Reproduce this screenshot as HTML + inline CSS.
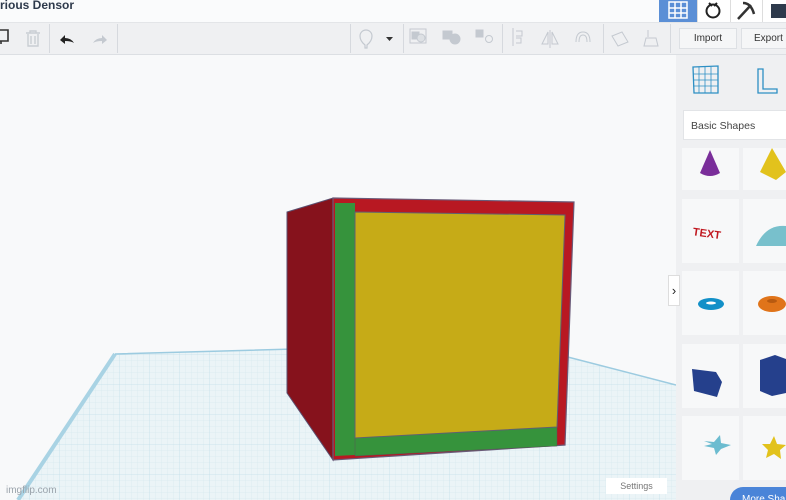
<!DOCTYPE html>
<html style="width:786px;height:500px;overflow:hidden"><head><meta charset="utf-8"><style>
*{margin:0;padding:0;box-sizing:border-box}
body{width:786px;height:500px;overflow:hidden;background:#f8f9fa;font-family:"Liberation Sans",sans-serif;position:relative}
.abs{position:absolute}
</style></head><body>
<div class="abs" style="left:0;top:0;width:786px;height:22px;background:#fafbfc"></div>
<div class="abs" style="left:0;top:-2px;font-size:12px;font-weight:bold;color:#2e3a4c">rious Densor</div>
<div class="abs" style="left:659px;top:0;width:38px;height:22px;background:#5b8fd6"></div>
<svg class="abs" style="left:668px;top:1px" width="20" height="18"><g stroke="#fff" stroke-width="1.5" fill="none"><rect x="1" y="1" width="18" height="16" fill="#5b8fd6"/><path d="M7 1v16M13 1v16M1 7h18M1 12h18"/></g></svg>
<div class="abs" style="left:697px;top:0;width:33px;height:22px;background:#fff;border-left:1px solid #ddd"></div>
<svg class="abs" style="left:703px;top:0" width="22" height="20"><circle cx="10" cy="11" r="6.5" stroke="#222" stroke-width="2" fill="none"/><path d="M6 3l3 3M14 3l-3 3" stroke="#222" stroke-width="2"/></svg>
<div class="abs" style="left:730px;top:0;width:32px;height:22px;background:#fff;border-left:1px solid #ddd"></div>
<svg class="abs" style="left:735px;top:0" width="22" height="20"><path d="M3 19L16 5M8 3q8 0 11 11" stroke="#333" stroke-width="2.5" fill="none"/></svg>
<div class="abs" style="left:762px;top:0;width:24px;height:22px;background:#fff;border-left:1px solid #ddd"></div>
<div class="abs" style="left:771px;top:4px;width:15px;height:14px;background:#2e3a4c"></div>
<div class="abs" style="left:0;top:22px;width:786px;height:33px;background:#eff0f2;border-top:1px solid #e3e5e8;border-bottom:1px solid #dcdfe3"></div>
<svg class="abs" style="left:0;top:22px" width="676" height="33">
<g fill="none" stroke="#d6d9de"><path d="M49.5 2v29M117.5 2v29M350.5 2v29M403.5 2v29M502.5 2v29M603.5 2v29M670.5 2v29"/></g>
<path d="M-2 8h10v11H-2M1 19v3" stroke="#333" stroke-width="1.6" fill="none"/>
<path d="M26 11h14M30 11v-2h6v2M28 12v12h10V12M31 14v8M35 14v8" stroke="#c9cdd3" stroke-width="1.4" fill="none"/>
<path d="M60 18l5-5v3q6 0 9 5q-3-2-9-2v3z" fill="#222"/>
<path d="M107 18l-5-5v3q-6 0-9 5q3-2 9-2v3z" fill="#c4c9d0"/>
<path d="M365 23q-5-4-5-9a6 6 0 0112 0q0 5-5 9v3h-2z" stroke="#c4c9d0" fill="none" stroke-width="1.2"/>
<path d="M386 15h7l-3.5 4z" fill="#333"/>
<g fill="#c4c9d0" stroke="#c4c9d0"><rect x="410" y="7" width="16" height="14" fill="none"/><rect x="412" y="10" width="7" height="7"/><circle cx="421" cy="16" r="4" fill="#dde0e4"/>
<rect x="443" y="9" width="9" height="8"/><circle cx="455" cy="17" r="5"/>
<rect x="476" y="8" width="7" height="7"/><circle cx="489" cy="17" r="3.5" fill="none"/>
<path d="M513 6v18M516 9h6v5h-6M516 16h5v5h-5" fill="none"/>
<path d="M550 8v18M548 22l-6 0 6-12zM552 22h6l-6-12z" fill="none"/>
<path d="M576 20q0-10 7-10t7 10M579 20q0-7 4-7t4 7" fill="none"/>
<path d="M612 14l10-4 6 10-10 4z" fill="none"/><path d="M648 8v7M646 16h10l2 8h-14z" fill="none"/></g>
</svg>
<div class="abs" style="left:679px;top:28px;width:58px;height:21px;border:1px solid #dde0e4;background:#f5f6f7;font-size:10px;color:#333;text-align:center;line-height:19px">Import</div>
<div class="abs" style="left:741px;top:28px;width:50px;height:21px;border:1px solid #dde0e4;background:#f5f6f7;font-size:10px;color:#333;padding-left:12px;line-height:19px">Export</div>
<svg class="abs" style="left:0;top:55px" width="676" height="445">
<defs><pattern id="g" width="6" height="6" patternUnits="userSpaceOnUse"><path d="M6 0v6M0 6h6" stroke="#d2e6ee" stroke-width="0.6"/></pattern>
<pattern id="G" width="30" height="30" patternUnits="userSpaceOnUse"><path d="M30 0v30M0 30h30" stroke="#b9d9e6" stroke-width="0.8"/></pattern></defs>
<polygon points="115,299 330,293 560,300 676,330 676,445 18,445" fill="#ebf4f7"/>
<polygon points="115,299 330,293 560,300 676,330 676,445 18,445" fill="url(#g)"/>
<polygon points="115,299 330,293 560,300 676,330 676,445 18,445" fill="url(#G)" opacity=".6"/>
<path d="M115,299 L18,445" stroke="#a9d3e4" stroke-width="4"/>
<path d="M115,299 L330,293 M560,300 L676,330" stroke="#9ccbe0" stroke-width="1.5"/>
</svg>
<svg class="abs" style="left:0;top:0" width="676" height="500">
<polygon points="287,212 333,198 333,460 287,393" fill="#86121c" stroke="#5b5070" stroke-width="1"/>
<polygon points="333,198 574,202 565,445 333,460" fill="#b81822" stroke="#6a5a78" stroke-width="1.2"/>
<polygon points="335,203 355,203 355,455 335,456" fill="#36933c"/>
<polygon points="355,425 557,425 557,446 355,456" fill="#36933c" stroke="#555" stroke-width=".5"/>
<polygon points="355,212 565,215 557,427 355,438" fill="#c6ab17" stroke="#606070" stroke-width="1"/>
</svg>
<div class="abs" style="left:6px;top:485px;font-size:10px;color:#9aa3ab">imgflip.com</div>
<div class="abs" style="left:606px;top:478px;width:61px;height:16px;background:#fff;font-size:9px;color:#777;text-align:center;line-height:16px">Settings</div>
<div class="abs" style="left:676px;top:55px;width:110px;height:445px;background:#eff0f2"></div>
<svg class="abs" style="left:690px;top:64px" width="96" height="36">
<g stroke="#2d8fc4" fill="none" stroke-width="1.3"><path d="M3 3l25-1 0 27-24 0z"/><path d="M9 3v26M15 3v26M21 3v26M3 10h25M3 16h25M3 22h25" stroke-width=".8"/>
<path d="M68 5h5v20h14v4H68z"/></g></svg>
<div class="abs" style="left:683px;top:110px;width:110px;height:30px;background:#fff;border:1px solid #e2e4e7;font-size:10.5px;color:#444;padding:9px 0 0 7px">Basic Shapes</div>
<div class="abs" style="left:682px;top:148px;width:57px;height:42px;background:#f7f8f9"></div>
<div class="abs" style="left:743px;top:148px;width:50px;height:42px;background:#f7f8f9"></div>
<div class="abs" style="left:682px;top:199px;width:57px;height:64px;background:#f7f8f9"></div>
<div class="abs" style="left:743px;top:199px;width:50px;height:64px;background:#f7f8f9"></div>
<div class="abs" style="left:682px;top:271px;width:57px;height:64px;background:#f7f8f9"></div>
<div class="abs" style="left:743px;top:271px;width:50px;height:64px;background:#f7f8f9"></div>
<div class="abs" style="left:682px;top:344px;width:57px;height:64px;background:#f7f8f9"></div>
<div class="abs" style="left:743px;top:344px;width:50px;height:64px;background:#f7f8f9"></div>
<div class="abs" style="left:682px;top:416px;width:57px;height:64px;background:#f7f8f9"></div>
<div class="abs" style="left:743px;top:416px;width:50px;height:64px;background:#f7f8f9"></div>
<svg class="abs" style="left:676px;top:140px" width="110" height="360">
<path d="M34 10L24 33q10 6 20 0z" fill="#7a2e9a"/>
<path d="M96 8L84 32l16 8 10-8z" fill="#e2c21c"/>
<text x="17" y="97" font-size="11" font-weight="bold" fill="#c01820" font-family="Liberation Sans" transform="rotate(8 30 92)">TEXT</text>
<path d="M80 106q10-22 30-20v20z" fill="#78c0cc"/>
<ellipse cx="35" cy="164" rx="13" ry="6" fill="#1290c8"/><ellipse cx="35" cy="163" rx="5" ry="1.5" fill="#fff"/>
<ellipse cx="96" cy="164" rx="14" ry="8" fill="#e0741a"/><ellipse cx="96" cy="161" rx="5" ry="2" fill="#b85a10"/>
<path d="M16 229l24 3 6 10-5 15-23-6z" fill="#25408c"/>
<path d="M84 220l15-5 11 4v34l-14 3-12-5z" fill="#25408c"/>
<path d="M28 301l10 1 6-7 1 8 10 2-10 4-5 6-2-7-10-2 8-2z" fill="#6cbcd0"/>
<path d="M86 304l8 0 4-8 3 8 9 1-6 5 1 9-7-5-8 4 2-8z" fill="#e2c21c"/>
</svg>
<div class="abs" style="left:668px;top:275px;width:12px;height:31px;background:#fff;border:1px solid #ddd;font-size:13px;line-height:29px;text-align:center;color:#222">›</div>
<div class="abs" style="left:730px;top:487px;width:56px;height:13px;overflow:hidden"><div style="width:80px;height:26px;background:#4a84d8;border-radius:13px;color:#fff;font-size:10px;padding:7px 0 0 12px">More Sha</div></div>
</body></html>
